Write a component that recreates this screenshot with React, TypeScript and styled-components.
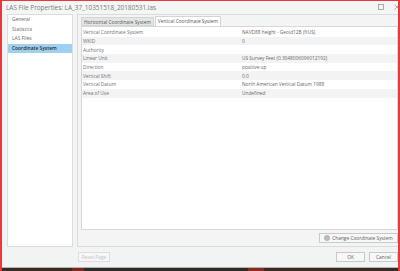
import React from 'react';
import styled, { createGlobalStyle } from 'styled-components';

const Global = createGlobalStyle`
  html, body { margin: 0; padding: 0; background: #2b211c; }
  body { font-family: "Open Sans", "Noto Sans", sans-serif; }
  * { box-sizing: border-box; }
`;

const Screen = styled.div`
  position: relative;
  width: 400px;
  height: 271px;
  overflow: hidden;
  background: linear-gradient(90deg, #3a2c24 0 18%, #7a2a1e 18% 21%, #2e2a26 21% 62%, #8c2b20 62% 66%, #3a2c24 66% 100%);
`;

const RedOutline = styled.div`
  position: absolute;
  inset: 0 0 0 0;
  border-left: 2px solid #e8393c;
  border-top: 1px solid #e8393c;
  border-right: 2px solid #e8393c;
  pointer-events: none;
`;

const Dialog = styled.div`
  width: 404px;
  height: 268px;
  background: #f2f3f3;
  border-bottom: 1px solid #b5b5b5;
  display: flex;
  flex-direction: column;
`;

const TitleBar = styled.div`
  height: 14px;
  display: flex;
  align-items: center;
  padding-left: 6px;
  background: #f4f5f5;
`;

const Title = styled.div`
  flex: 1;
  font-size: 6.4px;
  color: #7a7a7a;
  white-space: nowrap;
`;

const WinButton = styled.div`
  width: 14px;
  height: 14px;
  display: flex;
  align-items: center;
  justify-content: center;
  margin-left: 2px;
`;

const Body = styled.div`
  flex: 1;
  display: flex;
  gap: 4px;
  padding-left: 7px;
`;

const Nav = styled.div`
  width: 66px;
  background: #ffffff;
  border: 1px solid #dcdddd;
  display: flex;
  flex-direction: column;
`;

const NavItem = styled.div<{ $active?: boolean }>`
  height: 9.5px;
  line-height: 9.5px;
  padding-left: 4px;
  font-size: 4.9px;
  color: ${p => (p.$active ? '#2a2a2a' : '#666')};
  font-weight: ${p => (p.$active ? 600 : 400)};
  background: ${p => (p.$active ? '#9fd0f1' : 'transparent')};
  white-space: nowrap;
`;

const Main = styled.div`
  flex: 1;
  border: 1px solid #dadbdb;
  background: #f3f4f4;
  padding: 1px 5px 3px 3px;
  display: flex;
  flex-direction: column;
`;

const Tabs = styled.div`
  display: flex;
  height: 10px;
  align-items: flex-end;
`;

const Tab = styled.div<{ $active?: boolean }>`
  height: ${p => (p.$active ? '10px' : '9px')};
  line-height: 9px;
  padding: 0 2px;
  font-size: 4.8px;
  color: #555;
  white-space: nowrap;
  background: ${p => (p.$active ? '#ffffff' : '#e4e5e6')};
  border: 1px solid #d3d4d4;
  border-bottom: ${p => (p.$active ? 'none' : '1px solid #d3d4d4')};
  margin-right: 1px;
`;

const TablePanel = styled.div`
  height: 204px;
  background: #ffffff;
  border: 1px solid #d6d7d7;
  padding-top: 1px;
`;

const Row = styled.div<{ $alt?: boolean }>`
  height: 8.7px;
  display: flex;
  align-items: center;
  background: ${p => (p.$alt ? '#f2f3f4' : '#ffffff')};
  font-size: 4.8px;
  color: #707070;
  white-space: nowrap;
`;

const Label = styled.div`
  width: 160px;
  padding-left: 1px;
`;

const Value = styled.div`
  flex: 1;
  color: #666;
`;

const ButtonRow = styled.div`
  display: flex;
  justify-content: flex-end;
  padding-top: 3px;
`;

const Button = styled.div<{ $w: number; $disabled?: boolean }>`
  width: ${p => p.$w}px;
  height: 10px;
  display: flex;
  align-items: center;
  justify-content: center;
  gap: 2px;
  font-size: 4.8px;
  color: ${p => (p.$disabled ? '#c4c4c4' : '#606060')};
  background: #f7f7f7;
  border: 1px solid ${p => (p.$disabled ? '#dedede' : '#c9c9c9')};
  white-space: nowrap;
`;

const Footer = styled.div`
  height: 20px;
  display: flex;
  align-items: center;
  padding-left: 78px;
  padding-right: 6px;
  gap: 4px;
`;

const Spacer = styled.div`
  flex: 1;
`;

const rows: [string, string][] = [
  ['Vertical Coordinate System', 'NAVD88 height - Geoid12B (ftUS)'],
  ['WKID', '0'],
  ['Authority', ''],
  ['Linear Unit', 'US Survey Feet (0.3048006096012192)'],
  ['Direction', 'positive up'],
  ['Vertical Shift', '0.0'],
  ['Vertical Datum', 'North American Vertical Datum 1988'],
  ['Area of Use', 'Undefined'],
];

export default function App() {
  return (
    <Screen>
      <Global />
      <Dialog>
        <TitleBar>
          <Title>LAS File Properties: LA_37_10351518_20180531.las</Title>
          <WinButton>
            <svg width="6" height="6" viewBox="0 0 6 6">
              <rect x="0.5" y="0.5" width="5" height="5" fill="none" stroke="#8a8a8a" strokeWidth="0.7" />
            </svg>
          </WinButton>
          <WinButton>
            <svg width="6" height="6" viewBox="0 0 6 6">
              <path d="M0.5 0.5 L5.5 5.5 M5.5 0.5 L0.5 5.5" stroke="#8a8a8a" strokeWidth="0.7" />
            </svg>
          </WinButton>
        </TitleBar>
        <Body>
          <Nav>
            <NavItem>General</NavItem>
            <NavItem>Statistics</NavItem>
            <NavItem>LAS Files</NavItem>
            <NavItem $active>Coordinate System</NavItem>
          </Nav>
          <Main>
            <Tabs>
              <Tab>Horizontal Coordinate System</Tab>
              <Tab $active>Vertical Coordinate System</Tab>
            </Tabs>
            <TablePanel>
              {rows.map(([l, v], i) => (
                <Row key={l} $alt={i % 2 === 1}>
                  <Label>{l}</Label>
                  <Value>{v}</Value>
                </Row>
              ))}
            </TablePanel>
            <ButtonRow>
              <Button $w={79}>
                <svg width="6" height="6" viewBox="0 0 6 6">
                  <circle cx="3" cy="3" r="2.7" fill="#bcbcbc" stroke="#9a9a9a" strokeWidth="0.4" />
                </svg>
                Change Coordinate System
              </Button>
            </ButtonRow>
          </Main>
        </Body>
        <Footer>
          <Button $w={32} $disabled>Reset Page</Button>
          <Spacer />
          <Button $w={29}>OK</Button>
          <Button $w={29}>Cancel</Button>
        </Footer>
      </Dialog>
      <RedOutline />
    </Screen>
  );
}
